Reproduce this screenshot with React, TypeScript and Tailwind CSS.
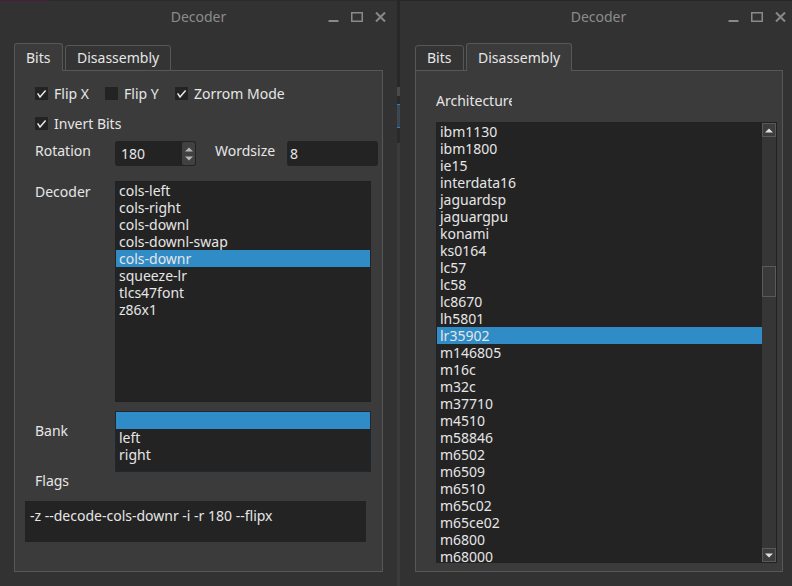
import React from 'react';

const decoders = ['cols-left', 'cols-right', 'cols-downl', 'cols-downl-swap', 'cols-downr', 'squeeze-lr', 'tlcs47font', 'z86x1'];

const archs = [
  'ibm1130', 'ibm1800', 'ie15', 'interdata16', 'jaguardsp', 'jaguargpu', 'konami', 'ks0164', 'lc57', 'lc58',
  'lc8670', 'lh5801', 'lr35902', 'm146805', 'm16c', 'm32c', 'm37710', 'm4510', 'm58846', 'm6502', 'm6509',
  'm6510', 'm65c02', 'm65ce02', 'm6800', 'm68000',
];

function WindowControls() {
  return (
    <div className="flex items-center gap-[12px] text-[#8a8a8a]">
      <svg width="11" height="10" viewBox="0 0 11 10">
        <rect x="0.5" y="8" width="10" height="2" fill="currentColor" />
      </svg>
      <svg width="12" height="10" viewBox="0 0 12 10">
        <rect x="0.75" y="0.75" width="10.5" height="8.5" stroke="currentColor" strokeWidth="1.5" fill="none" />
      </svg>
      <svg width="11" height="10" viewBox="0 0 11 10">
        <path d="M1 0.5 L10 9.5 M10 0.5 L1 9.5" stroke="currentColor" strokeWidth="2" />
      </svg>
    </div>
  );
}

function TitleBar({ topLine }: { topLine: React.ReactNode }) {
  return (
    <div className="flex flex-col">
      {topLine}
      <div className="grid grid-cols-[1fr_auto_1fr] items-center h-[31px]">
        <div />
        <div className="text-[#8c8c8c] text-[14px]">Decoder</div>
        <div className="flex justify-end pr-[11px]">
          <WindowControls />
        </div>
      </div>
    </div>
  );
}

function Tabs({ active }: { active: 'bits' | 'dis' }) {
  const on = 'bg-[#3b3b3b] border border-b-0 border-[#575757] rounded-t-[3px] h-[28px] pt-[5px] relative z-10';
  const off = 'bg-[#343434] border border-[#575757] rounded-t-[3px] h-[26px] pt-[3px] mt-[2px]';
  return (
    <div className="flex items-start gap-[2px] -mb-px h-[28px]">
      <div className={`w-[49px] pl-[11px] ${active === 'bits' ? on : off}`}>Bits</div>
      <div className={`w-[106px] pl-[11px] ${active === 'dis' ? on : off}`}>Disassembly</div>
    </div>
  );
}

function Check({ on, label }: { on: boolean; label: string }) {
  return (
    <div className="flex items-center h-[17px]">
      <div className="w-[13px] h-[13px] bg-[#232323] shrink-0">
        {on && (
          <svg width="13" height="13" viewBox="0 0 13 13">
            <path d="M2.6 6.4 L5 10 L10.6 3.6" stroke="#e8e8e8" strokeWidth="1.5" fill="none" />
          </svg>
        )}
      </div>
      <span className="ml-[6px] whitespace-nowrap">{label}</span>
    </div>
  );
}

function Tri({ up, color = '#b5b5b5' }: { up: boolean; color?: string }) {
  return (
    <svg width="8" height="5" viewBox="0 0 8 5">
      <path d={up ? 'M0 4.5 L4 0.5 L8 4.5 Z' : 'M0 0.5 L8 0.5 L4 4.5 Z'} fill={color} />
    </svg>
  );
}

function BitsPane() {
  return (
    <div className="flex flex-col pl-[20px] pt-[14px]">
      <div className="flex">
        <div className="w-[70px]"><Check on label="Flip X" /></div>
        <div className="w-[70px]"><Check on={false} label="Flip Y" /></div>
        <Check on label="Zorrom Mode" />
      </div>
      <div className="mt-[13px]">
        <Check on label="Invert Bits" />
      </div>

      <div className="flex items-start mt-[9px]">
        <div className="w-[80px] pt-[1px]">Rotation</div>
        <div className="w-[81px] h-[25px] bg-[#232323] rounded-[3px] flex items-center justify-between pl-[6px] pr-[1px]">
          <span>180</span>
          <div className="w-[13px] h-[23px] bg-[#414141] rounded-[2px] flex flex-col items-center justify-center gap-[4px]">
            <Tri up />
            <Tri up={false} />
          </div>
        </div>
        <div className="w-[72px] ml-[19px] pt-[1px]">Wordsize</div>
        <div className="w-[91px] h-[25px] bg-[#232323] rounded-[3px] flex items-center pl-[3px]">8</div>
      </div>

      <div className="flex items-start mt-[15px]">
        <div className="w-[80px] pt-[2px]">Decoder</div>
        <div className="w-[256px] h-[221px] bg-[#232323] border border-[#222] flex flex-col">
          {decoders.map((d) => (
            <div key={d} className={`h-[17px] pl-[3px] ${d === 'cols-downr' ? 'bg-[#308cc6]' : ''}`}>{d}</div>
          ))}
        </div>
      </div>

      <div className="flex items-start mt-[9px]">
        <div className="w-[80px] pt-[11px]">Bank</div>
        <div className="w-[256px] h-[61px] bg-[#232323] border border-[#1d2830] flex flex-col">
          <div className="h-[17px] bg-[#308cc6]" />
          <div className="h-[17px] pl-[3px]">left</div>
          <div className="h-[17px] pl-[3px]">right</div>
        </div>
      </div>

      <div className="mt-0">Flags</div>
      <div className="-ml-[10px] mt-[12px] w-[341px] h-[41px] bg-[#232323] pl-[5px] pt-[6px] whitespace-nowrap">
        -z --decode-cols-downr -i -r 180 --flipx
      </div>
    </div>
  );
}

function DisPane() {
  return (
    <div className="flex flex-col pl-[20px] pt-[21px] pr-[5px]">
      <div className="w-[76px] overflow-hidden whitespace-nowrap">Architecture</div>
      <div className="mt-[13px] h-[441px] bg-[#232323] border border-[#222] flex">
        <div className="flex-1 flex flex-col overflow-hidden">
          {archs.map((a) => (
            <div key={a} className={`h-[17px] shrink-0 pl-[3px] ${a === 'lr35902' ? 'bg-[#308cc6]' : ''}`}>{a}</div>
          ))}
        </div>
        <div className="w-[14px] bg-[#363636] flex flex-col">
          <div className="h-[14px] border border-[#5a5a5a] bg-[#3d3d3d] flex items-center justify-center">
            <Tri up color="#e0e0e0" />
          </div>
          <div className="h-[129px]" />
          <div className="h-[31px] border border-[#5a5a5a] bg-[#3a3a3a]" />
          <div className="flex-1" />
          <div className="h-[14px] border border-[#5a5a5a] bg-[#3d3d3d] flex items-center justify-center">
            <Tri up={false} color="#e0e0e0" />
          </div>
        </div>
      </div>
    </div>
  );
}

export default function App() {
  return (
    <div className="w-[792px] h-[586px] overflow-hidden flex bg-[#323232] text-[#e6e6e6] text-[14px] leading-[17px] font-['Noto_Sans',sans-serif]">
      {/* left window */}
      <div className="w-[397px] shrink-0 flex flex-col">
        <TitleBar
          topLine={
            <div className="flex h-px">
              <div className="w-[50px] bg-[#4a1d3c]" />
              <div className="flex-1 bg-[#2a2a2a]" />
            </div>
          }
        />
        <div className="px-[14px] pt-[11px] flex flex-col">
          <Tabs active="bits" />
          <div className="h-[502px] bg-[#3b3b3b] border border-[#575757]">
            <BitsPane />
          </div>
        </div>
      </div>

      {/* sliver of a window behind */}
      <div className="w-[3px] shrink-0 flex flex-col">
        <div className="h-[87px] bg-[#282828]" />
        <div className="h-[9px] bg-[#4a4a4a]" />
        <div className="h-[8px] bg-[#2a2a2a]" />
        <div className="h-px bg-[#2f7fb8]" />
        <div className="h-[22px] bg-[#3b4854]" />
        <div className="h-px bg-[#2f7fb8]" />
        <div className="h-[15px] bg-[#2a2a2a]" />
        <div className="flex-1 bg-[#3c3c3c]" />
      </div>

      {/* right window */}
      <div className="w-[397px] shrink-0 flex flex-col">
        <TitleBar topLine={<div className="h-px bg-[#262626]" />} />
        <div className="pl-[15px] pr-[14px] pt-[11px] flex flex-col">
          <Tabs active="dis" />
          <div className="h-[502px] w-[368px] bg-[#3b3b3b] border border-[#575757]">
            <DisPane />
          </div>
        </div>
      </div>
    </div>
  );
}
